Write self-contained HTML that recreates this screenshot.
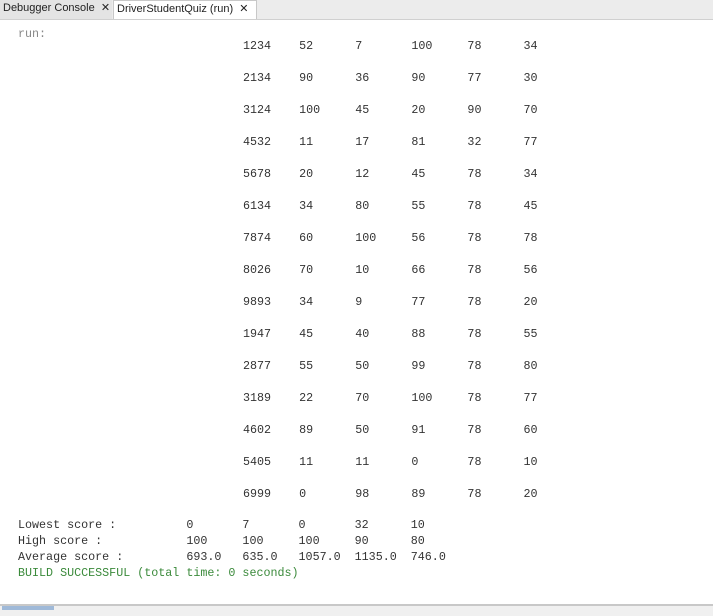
<!DOCTYPE html>
<html><head><style>
body{margin:0;width:713px;height:614px;background:#fff;position:relative;overflow:hidden;font-family:"Liberation Mono",monospace;font-size:11.7px;color:#333}
.tabs{position:absolute;left:0;top:0;width:713px;height:19px;background:#ececec;border-bottom:1px solid #d0d0d0;font-family:"Liberation Sans",sans-serif;font-size:11px;color:#222;white-space:nowrap}
.t{position:absolute;top:0;height:19px;line-height:17px;padding:0 3px;box-sizing:border-box;overflow:hidden}
.t1{left:0;width:112px;background:#e4e4e4}
.t2{left:113px;width:144px;background:#fff;border:1px solid #c8c8c8;border-bottom:none}
pre{margin:0;position:absolute;font:inherit;white-space:pre}
.rows{left:243px;top:30px;line-height:32px}
.sum{left:18px;top:517px;line-height:16px}
.g{color:#3b8a3b}
.bot{position:absolute;left:0;top:604px;width:713px;height:10px;background:#f0f0f0;border-top:2px solid #c8c8c8}
.bot div{position:absolute;left:2px;top:0;width:52px;height:4px;background:#9fb9d8}
</style></head><body>
<div class="tabs"><div class="t t1">Debugger Console &nbsp;✕</div><div class="t t2">DriverStudentQuiz (run) &nbsp;✕</div></div>
<pre style="left:18px;top:27px;color:#888">run:</pre>
<pre class="rows">1234    52      7       100     78      34
2134    90      36      90      77      30
3124    100     45      20      90      70
4532    11      17      81      32      77
5678    20      12      45      78      34
6134    34      80      55      78      45
7874    60      100     56      78      78
8026    70      10      66      78      56
9893    34      9       77      78      20
1947    45      40      88      78      55
2877    55      50      99      78      80
3189    22      70      100     78      77
4602    89      50      91      78      60
5405    11      11      0       78      10
6999    0       98      89      78      20</pre>
<pre class="sum">Lowest score :          0       7       0       32      10
High score :            100     100     100     90      80
Average score :         693.0   635.0   1057.0  1135.0  746.0
<span class="g">BUILD SUCCESSFUL (total time: 0 seconds)</span></pre>
<div class="bot"><div></div></div>
</body></html>
